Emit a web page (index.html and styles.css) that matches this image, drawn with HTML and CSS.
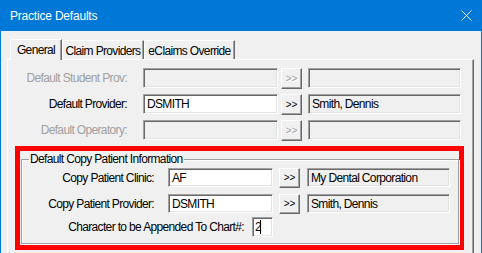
FILE: index.html
```html
<!DOCTYPE html>
<html>
    <head>
        <title>Practice Defaults</title>
        <link rel="stylesheet" href="styles.css">
    </head>
    <body>
        <div class="window">
            <div class="titlebar">
                <span class="title">Practice Defaults</span>
                <svg class="close" width="11" height="11" viewBox="0 0 11 11">
                    <path d="M0.5 0.5 L10.5 10.5 M10.5 0.5 L0.5 10.5" stroke="#fff" stroke-width="1" fill="none"/>
                </svg>
            </div>
            <div class="client">
                <div class="tabs">
                    <div class="tab active">General</div>
                    <div class="tab tab-claim">Claim Providers</div>
                    <div class="tab tab-eclaims">eClaims Override</div>
                </div>
                <div class="panel">
                    <div class="row disabled">
                        <div class="label">Default Student Prov:</div>
                        <div class="edit"></div>
                        <div class="btn">&gt;&gt;</div>
                        <div class="field"></div>
                    </div>
                    <div class="row">
                        <div class="label">Default Provider:</div>
                        <div class="edit white">DSMITH</div>
                        <div class="btn">&gt;&gt;</div>
                        <div class="field">Smith, Dennis</div>
                    </div>
                    <div class="row disabled">
                        <div class="label">Default Operatory:</div>
                        <div class="edit"></div>
                        <div class="btn">&gt;&gt;</div>
                        <div class="field"></div>
                    </div>

                    <div class="highlight">
                        <fieldset class="group">
                            <legend>Default Copy Patient Information</legend>
                            <div class="grow">
                                <div class="glabel">Copy Patient Clinic:</div>
                                <div class="edit white gedit">AF</div>
                                <div class="btn gbtn">&gt;&gt;</div>
                                <div class="field gfield">My Dental Corporation</div>
                            </div>
                            <div class="grow second">
                                <div class="glabel">Copy Patient Provider:</div>
                                <div class="edit white gedit">DSMITH</div>
                                <div class="btn gbtn">&gt;&gt;</div>
                                <div class="field gfield">Smith, Dennis</div>
                            </div>
                            <div class="grow third">
                                <div class="glabel wide">Character to be Appended To Chart#:</div>
                                <div class="edit white small">2<span class="caret"></span></div>
                            </div>
                        </fieldset>
                    </div>
                </div>
            </div>
        </div>
    </body>
</html>
```

FILE: styles.css
```css
body{
    margin: 0;
    background: #f0f0f0;
    font-family: "Liberation Sans", Arial, sans-serif;
    font-size: 12px;
    letter-spacing: -0.65px;
    color: #000;
}

.window{
    width: 482px;
    height: 253px;
    box-sizing: border-box;
    border-left: 1px solid #0078d7;
    border-right: 1px solid #0078d7;
    overflow: hidden;
    background: #f0f0f0;
}

.titlebar{
    height: 31px;
    background: #0078d7;
    display: flex;
    align-items: center;
    padding: 0 9px 0 9px;
    color: #fff;
}
.title{
    font-size: 12px;
    letter-spacing: -0.2px;
    flex: 1;
    margin-top: 1px;
}
.close{
    margin-top: -1px;
}

.client{
    padding-top: 8px;
}

/* tabs */
.tabs{
    display: flex;
    align-items: flex-end;
    height: 20px;
    margin-left: 9px;
}
.tab{
    height: 19px;
    box-sizing: border-box;
    border-top: 1px solid #fff;
    border-left: 1px solid #fff;
    border-right: 1px solid #696969;
    box-shadow: inset -1px 0 0 #a0a0a0;
    display: flex;
    align-items: center;
    justify-content: center;
    padding-top: 1px;
}
.tab.active{
    width: 52px;
    height: 21px;
    margin-bottom: -1px;
    position: relative;
    z-index: 1;
    background: #f0f0f0;
    padding-bottom: 2px;
}
.tab-claim{
    width: 82px;
}
.tab-eclaims{
    width: 91px;
}

.panel{
    margin-left: 6px;
    width: 467px;
    height: 200px;
    box-sizing: border-box;
    border-top: 1px solid #fff;
    border-left: 1px solid #fff;
    border-right: 1px solid #696969;
    box-shadow: inset -1px 0 0 #a0a0a0;
    padding-top: 8px;
}

/* rows */
.row{
    display: flex;
    align-items: center;
    height: 20px;
    margin-bottom: 6px;
}
.label{
    width: 119px;
    text-align: right;
    margin-right: 16px;
}
.edit, .field{
    height: 20px;
    box-sizing: border-box;
    border: 1px solid;
    border-color: #a0a0a0 #fff #fff #a0a0a0;
    box-shadow: inset 1px 1px 0 #696969, inset -1px -1px 0 #e3e3e3;
    padding: 2px 0 0 3px;
    white-space: nowrap;
}
.edit{
    width: 135px;
    margin-right: 3px;
}
.white{
    background: #fff;
}
.field{
    width: 153px;
    background: #f0f0f0;
}
.btn{
    width: 21px;
    height: 21px;
    box-sizing: border-box;
    border: 1px solid;
    border-color: #fff #696969 #696969 #fff;
    box-shadow: inset -1px -1px 0 #a0a0a0;
    display: flex;
    align-items: center;
    justify-content: center;
    font-size: 10px;
    letter-spacing: 0;
    margin-right: 6px;
}
.disabled .label{
    color: #a0a0a0;
}
.disabled .btn{
    color: #a0a0a0;
    text-shadow: 1px 1px 0 #fff;
}

/* red highlight and group */
.highlight{
    margin-top: 1px;
    margin-left: 7px;
    width: 449px;
    height: 104px;
    box-sizing: border-box;
    border: 5px solid #ff0000;
}
.group{
    margin: 1px 0 0 1px;
    padding: 0;
    width: 438px;
    height: 92px;
    box-sizing: border-box;
    border: 1px solid #a0a0a0;
    box-shadow: 1px 1px 0 #fff, inset 1px 1px 0 #fff;
}
.group legend{
    margin-left: 7px;
    padding: 0 1px;
    line-height: 14px;
}
.grow{
    display: flex;
    align-items: center;
    height: 19px;
    margin-top: 2px;
}
.grow.second{
    margin-top: 7px;
}
.grow.third{
    margin-top: 4px;
    height: 20px;
}
.glabel{
    width: 132px;
    text-align: right;
    margin-right: 14px;
}
.glabel.wide{
    width: 222px;
    margin-right: 8px;
}
.gedit{
    width: 105px;
    height: 19px;
    margin-right: 6px;
}
.gbtn{
    height: 20px;
    margin-right: 7px;
}
.gfield{
    width: 143px;
    height: 19px;
}
.small{
    width: 21px;
    padding-left: 2px;
}
.caret{
    display: inline-block;
    width: 1px;
    height: 14px;
    background: #000;
    vertical-align: -3px;
    margin-left: -1px;
}
```
